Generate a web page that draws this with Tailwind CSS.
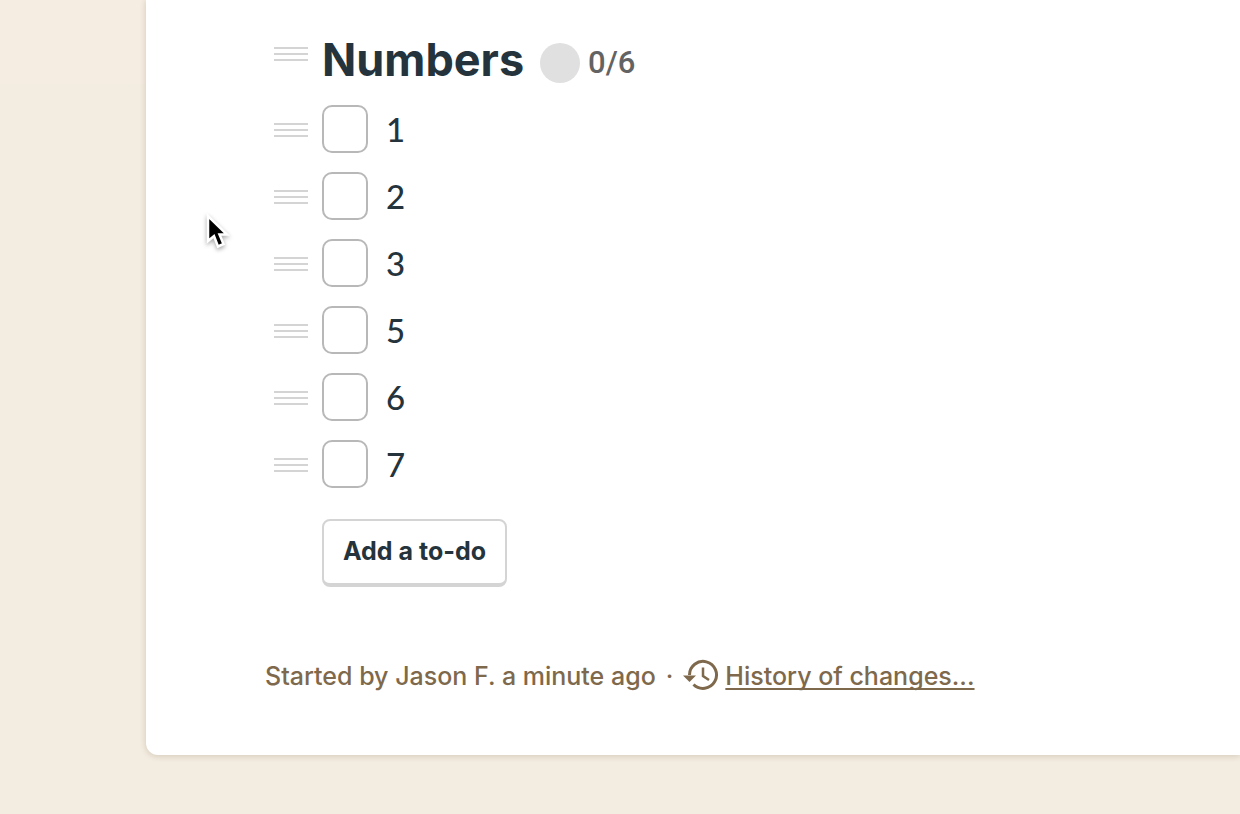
<!DOCTYPE html>
<html lang="en">
  <head>
    <meta charset="UTF-8" />
    <meta name="viewport" content="width=device-width, initial-scale=1.0" />
    <title>Numbers</title>
    <script src="https://cdn.jsdelivr.net/npm/@tailwindcss/browser@4"></script>
  </head>
  <body class="min-h-screen bg-[#f3ece0] font-['Inter','Liberation_Sans',sans-serif] text-[#25343c] overflow-x-hidden">
    <!-- slightly warmer strip behind the top of the sheet -->
    <div class="absolute top-0 left-0 w-full h-[84px] bg-[#f5ece2]"></div>

    <main class="relative ml-[146px] pt-9 pb-[62px] bg-white rounded-bl-xl shadow-[0_1px_6px_rgba(80,60,20,0.2)]">
      <section class="pl-32">
        <div class="flex items-center h-12">
          <svg class="w-[34px] h-[14px] mr-[14px] mb-3" viewBox="0 0 34 14" fill="#d4d4d4">
            <path d="M0 0h34v2H0zM0 6h34v2H0zM0 12h34v2H0z" />
          </svg>
          <h1 class="text-[45px] leading-12 font-bold">Numbers</h1>
          <span class="w-10 h-10 ml-4 mt-[6px] rounded-full bg-[#e0e0e0]"></span>
          <span class="ml-2 mt-[6px] text-[31px] leading-10 font-medium text-[#636363] font-['Roboto',sans-serif]">0/6</span>
        </div>

        <ul id="todos" class="mt-[21px] flex flex-col gap-[19px]"></ul>

        <button type="button" class="block mt-[31px] ml-12 h-[68px] px-[19px] bg-white border-2 border-b-4 border-[#d4d4d4] rounded-lg text-[25px] font-bold">
          Add a to-do
        </button>
      </section>

      <footer class="flex items-center mt-[72px] pl-[119px] h-[34px] text-[25px] leading-[34px] text-[#7e694c] font-medium whitespace-nowrap">
        <span>Started by Jason F. a minute ago</span>
        <span class="mx-[10px]">·</span>
        <svg class="w-9 h-8 mr-[6px] mb-[2px]" viewBox="0 0 36 32" fill="none" stroke="#7e694c" stroke-width="3">
          <path d="M6.500 16A13.500 13.500 0 1 1 10.500 25.500" />
          <path d="M20 8.500V17L26 21" stroke-width="2.500" />
          <path d="M0 16.500H13L6.500 23Z" fill="#7e694c" stroke="none" />
        </svg>
        <a href="#" class="underline decoration-2 underline-offset-3 [text-decoration-skip-ink:none]">History of changes...</a>
      </footer>
    </main>

    <!-- mouse pointer -->
    <svg class="absolute left-[204px] top-[211px] w-7 h-10 drop-shadow-[0_2px_2px_rgba(0,0,0,0.35)]" viewBox="0 0 28 40">
      <path d="M4 5V30L10 25L14 35.500L19.500 33L15.500 23.500H23Z" fill="#000" stroke="#fff" stroke-width="2.500" />
    </svg>

    <script>
      const todos = ["1", "2", "3", "5", "6", "7"];

      // one row per to-do: drag handle, checkbox and title
      document.getElementById("todos").innerHTML = todos
        .map(
          (title) => `
          <li class="flex items-center h-12">
            <svg class="w-[34px] h-[14px] mr-[14px] mt-[2px]" viewBox="0 0 34 14" fill="#d4d4d4">
              <path d="M0 0h34v2H0zM0 6h34v2H0zM0 12h34v2H0z" />
            </svg>
            <input type="checkbox" id="todo-${title}" class="appearance-none w-[46px] h-12 bg-white border-2 border-[#b8b8b8] rounded-[10px] checked:bg-[#25343c]" />
            <label for="todo-${title}" class="pl-[18px] text-[33px] leading-12 font-medium font-['Lato',sans-serif]">${title}</label>
          </li>`
        )
        .join("");
    </script>
  </body>
</html>
